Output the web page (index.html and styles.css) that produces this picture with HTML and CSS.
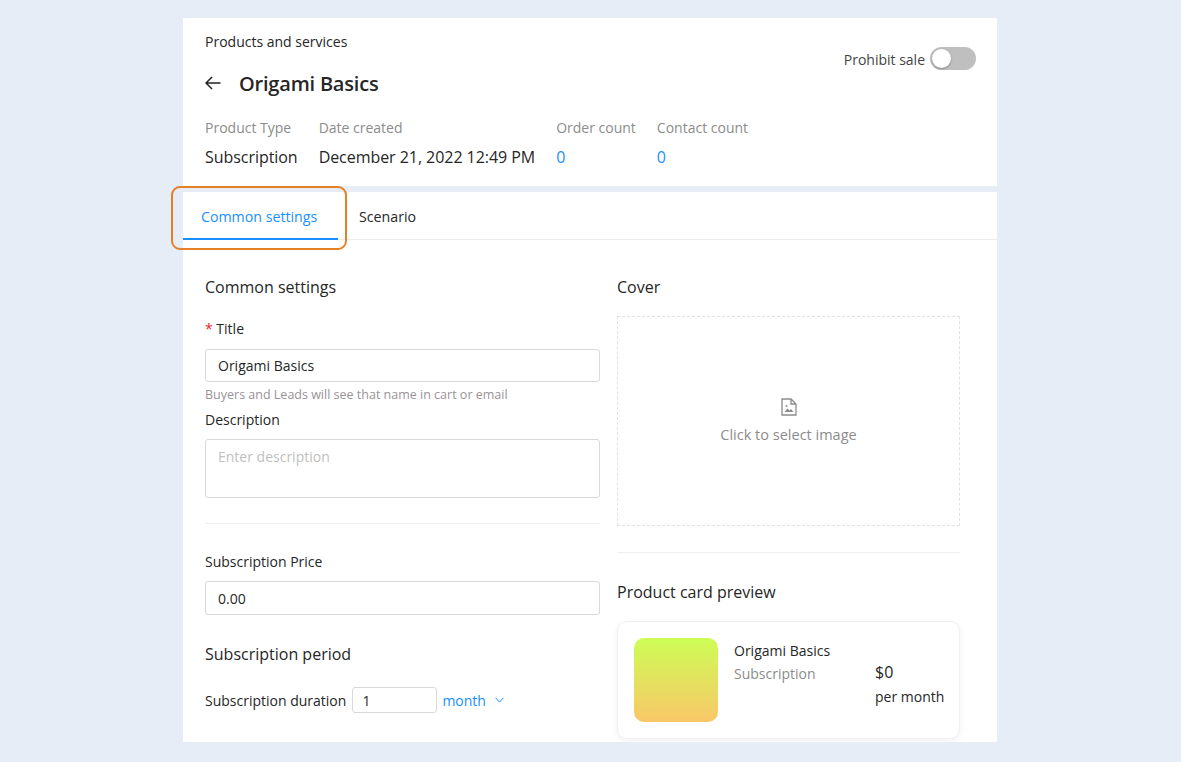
FILE: index.html
```html
<!DOCTYPE html>
<html lang="en">
<head>
    <meta charset="UTF-8">
    <meta name="viewport" content="width=device-width, initial-scale=1.0">
    <title>Origami Basics</title>
    <link rel="stylesheet" href="styles.css">
</head>
<body>
    <div class="page">
        <div class="head">
            <div class="crumb">Products and services</div>
            <div class="sale">
                <span>Prohibit sale</span>
                <div class="toggle"><div class="knob"></div></div>
            </div>
            <div class="title-row">
                <svg class="back" width="16" height="14" viewBox="0 0 16 14" fill="none" stroke="#222" stroke-width="1.5">
                    <path d="M15.5 7H1M7 1 1 7l6 6"/>
                </svg>
                <h1>Origami Basics</h1>
            </div>
            <div class="meta">
                <div><p class="meta-label">Product Type</p><p class="meta-value">Subscription</p></div>
                <div><p class="meta-label">Date created</p><p class="meta-value">December 21, 2022 12:49 PM</p></div>
                <div><p class="meta-label">Order count</p><p class="meta-value link">0</p></div>
                <div><p class="meta-label">Contact count</p><p class="meta-value link">0</p></div>
            </div>
        </div>

        <div class="panel">
            <div class="tabs">
                <div class="tab active">Common settings</div>
                <div class="tab">Scenario</div>
                <div class="marker"></div>
            </div>
            <div class="columns">
                <div class="col-left">
                    <h3>Common settings</h3>
                    <label class="label label-title"><span class="req">*</span> Title</label>
                    <div class="input">Origami Basics</div>
                    <div class="hint">Buyers and Leads will see that name in cart or email</div>
                    <label class="label label-desc">Description</label>
                    <div class="input area">Enter description</div>
                    <div class="line line-left"></div>
                    <label class="label label-price">Subscription Price</label>
                    <div class="input price">0.00</div>
                    <h3 class="period">Subscription period</h3>
                    <div class="duration">
                        <span>Subscription duration</span>
                        <div class="input small">1</div>
                        <span class="link">month</span>
                        <svg class="chev" width="9" height="6" viewBox="0 0 9 6" fill="none" stroke="#1890ff">
                            <path d="M.5.8 4.5 5l4-4.200"/>
                        </svg>
                    </div>
                </div>
                <div class="col-right">
                    <h3>Cover</h3>
                    <div class="cover">
                        <svg width="16" height="18" viewBox="0 0 16 18" fill="none" stroke="#8c8c8c" stroke-width="1.300">
                            <path d="M1 1h9l5 5v11H1zM10 1v5h5"/>
                            <circle cx="5.500" cy="8" r="1" fill="#8c8c8c" stroke="none"/>
                            <path d="M3.500 14l3-3.500 2 2 1.500-1.500 2.500 3z" fill="#8c8c8c" stroke="none"/>
                        </svg>
                        <span>Click to select image</span>
                    </div>
                    <div class="line line-right"></div>
                    <h3>Product card preview</h3>
                    <div class="card">
                        <div class="thumb"></div>
                        <div class="card-info">
                            <div class="card-name">Origami Basics</div>
                            <div class="card-type">Subscription</div>
                        </div>
                        <div class="card-price">
                            <div class="amount">$0</div>
                            <div>per month</div>
                        </div>
                    </div>
                </div>
            </div>
        </div>

        <div class="highlight"></div>
    </div>
</body>
</html>
```

FILE: styles.css
```css
*{
    box-sizing: border-box;
    font-family: "Open Sans", "Noto Sans", sans-serif;
}
html, body{
    height: 100%;
}
body{
    margin: 0;
    background-color: #e6edf6;
    color: #262626;
    font-size: 14px;
    overflow: hidden;
}
h1, h3, p{
    margin: 0;
    font-weight: normal;
}
.page{
    position: relative;
    width: 814px;
    margin: 18px 0 0 183px;
}
.link{
    color: #1890ff;
}

/* top block */
.head{
    position: relative;
    height: 168px;
    background-color: #fff;
    padding: 14px 22px 0;
}
.crumb{
    line-height: 20px;
}
.sale{
    position: absolute;
    top: 29px;
    right: 21px;
    display: flex;
    align-items: center;
    gap: 5px;
    color: #444;
}
.sale span{
    padding-top: 2px;
}
.toggle{
    width: 46px;
    height: 23px;
    border-radius: 12px;
    background-color: #bfbfbf;
    padding: 2px;
}
.knob{
    width: 19px;
    height: 19px;
    border-radius: 50%;
    background-color: #fff;
    box-shadow: 0 1px 2px #0000004d;
}
.title-row{
    display: flex;
    align-items: center;
    gap: 18px;
    margin-top: 14px;
    height: 34px;
}
.back{
    margin-bottom: 1px;
}
h1{
    font-size: 20px;
    font-weight: 600;
    letter-spacing: -0.2px;
}
.meta{
    display: flex;
    gap: 21px;
    margin-top: 18px;
}
.meta-label{
    color: #8c8c8c;
    line-height: 20px;
    margin-bottom: 9px;
}
.meta-value{
    font-size: 16px;
    line-height: 20px;
    letter-spacing: -0.05px;
}

/* tabs */
.panel{
    height: 550px;
    margin-top: 6px;
    background-color: #fff;
    overflow: hidden;
}
.tabs{
    position: relative;
    display: flex;
    height: 48px;
    border-bottom: 1px solid #ececec;
    line-height: 50px;
    font-size: 14.200px;
}
.tab.active{
    color: #1890ff;
    width: 176px;
    padding-left: 18px;
}
.marker{
    position: absolute;
    left: 0;
    bottom: -1px;
    width: 155px;
    height: 2px;
    background-color: #1890ff;
}
.highlight{
    position: absolute;
    left: -12px;
    top: 168px;
    width: 176px;
    height: 64px;
    border: 2px solid #e58027;
    border-radius: 9px;
}

/* form */
.columns{
    display: flex;
    gap: 17px;
    padding: 36px 37px 0 22px;
}
.col-left{
    width: 395px;
}
.col-right{
    width: 343px;
}
h3{
    font-size: 16px;
    line-height: 22px;
}
.label{
    display: block;
    line-height: 20px;
}
.label-title{
    margin-top: 21px;
    margin-bottom: 10px;
}
.req{
    color: #f5222d;
}
.input{
    height: 33px;
    border: 1px solid #d9d9d9;
    border-radius: 3px;
    padding: 0 12px;
    line-height: 32px;
}
.hint{
    font-size: 12.500px;
    color: #9b9298;
    line-height: 18px;
    margin-top: 4px;
}
.label-desc{
    margin-top: 6px;
    margin-bottom: 9px;
}
.area{
    height: 59px;
    line-height: 34px;
    color: #bfbfbf;
}
.line{
    height: 1px;
    background-color: #eee;
}
.line-left{
    margin-top: 25px;
}
.label-price{
    margin-top: 28px;
    margin-bottom: 9px;
}
.price{
    height: 34px;
    line-height: 33px;
}
.period{
    margin-top: 28px;
}
.duration{
    display: flex;
    align-items: center;
    margin-top: 22px;
}
.small{
    width: 85px;
    height: 26px;
    line-height: 25px;
    padding: 0 9px;
    margin: 0 5px 0 6px;
}
.chev{
    margin-left: 9px;
}

/* right column */
.cover{
    display: flex;
    flex-direction: column;
    align-items: center;
    gap: 9px;
    height: 210px;
    margin-top: 18px;
    padding-top: 81px;
    border: 1px dashed #e2e2e2;
    color: #8c8c8c;
    font-size: 14.500px;
}
.line-right{
    margin-top: 26px;
}
.line-right + h3{
    margin-top: 28px;
}
.card{
    display: flex;
    height: 118px;
    margin-top: 18px;
    padding: 16px 10px 16px 16px;
    border: 1px solid #f0f0f0;
    border-radius: 10px;
    box-shadow: 0 2px 6px #0000000f;
}
.thumb{
    flex: none;
    width: 84px;
    height: 84px;
    border-radius: 10px;
    background: linear-gradient(#cdfd55, #f9c768);
}
.card-info{
    flex: none;
    width: 157px;
    padding-left: 16px;
    line-height: 20px;
    margin-top: 3px;
}
.card-type{
    color: #8c8c8c;
    margin-top: 3px;
}
.card-price{
    line-height: 20px;
    margin-top: 24px;
    white-space: nowrap;
}
.amount{
    font-size: 16px;
    margin-bottom: 5px;
}
```
